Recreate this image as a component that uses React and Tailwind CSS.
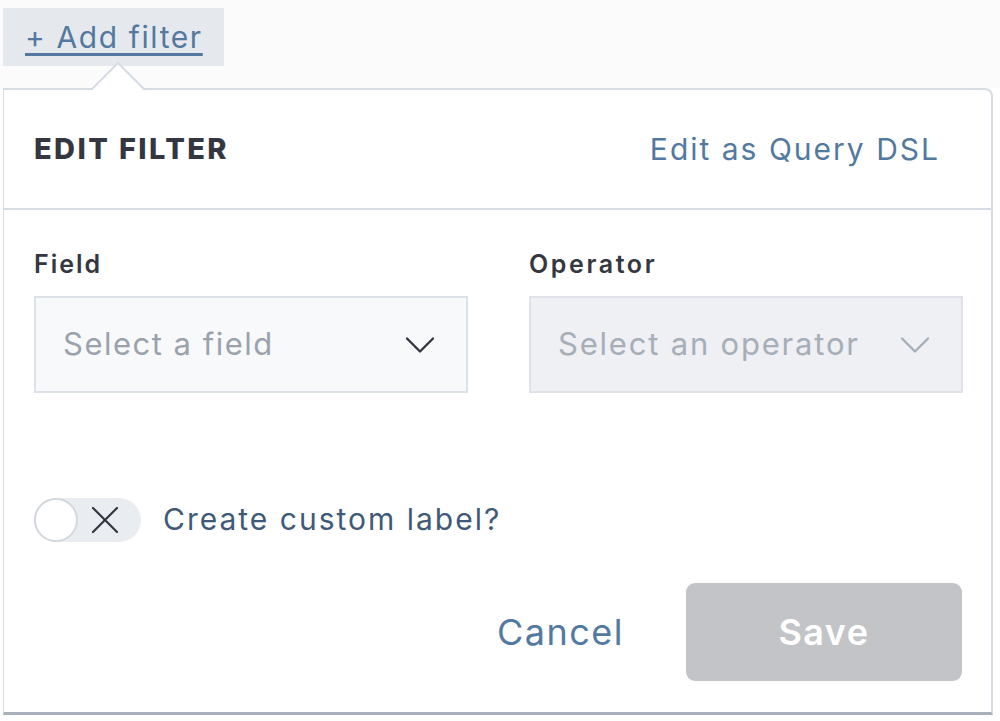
import { FiChevronDown, FiX } from "react-icons/fi";

export default function App() {
  return (
    <div className="w-[1000px] h-[721px] bg-white overflow-hidden" style={{ fontFamily: "Inter, 'Noto Sans', sans-serif" }}>
      <div className="h-[88px] bg-[#fbfbfc] pt-[8px] pl-[3px]">
        <div className="w-[221px] h-[58px] bg-[#e5e9ee] pl-[22px] flex items-center">
          <span className="text-[30px] leading-none tracking-[1.6px] text-[#5379a0] underline decoration-[3px] underline-offset-[5px]">+ Add filter</span>
        </div>
      </div>

      <div className="relative ml-[3px] w-[990px] h-[627px] border-t-2 border-r-2 border-l border-[#d6dce3] border-b-[3px] border-b-[#a8b0bb] rounded-tr-[8px] bg-white">
        <svg className="absolute left-[87px] top-[-28px]" width="58" height="30" viewBox="0 0 58 30">
          <path d="M0 28 L27 1 L54 28" fill="white" stroke="#d6dce3" strokeWidth="2" />
          <rect x="2" y="28" width="50" height="2" fill="white" />
        </svg>

        <div className="h-[120px] flex items-center justify-between pl-[30px] pr-[51px] border-b-2 border-[#d6dce3]">
          <span className="text-[29px] font-extrabold text-[#343741] tracking-[2.4px]">EDIT FILTER</span>
          <span className="text-[30px] text-[#5379a0] tracking-[2px]">Edit as Query DSL</span>
        </div>

        <div className="flex gap-[61px] pl-[30px] pt-[38px]">
          <div className="w-[434px]">
            <div className="text-[25px] font-semibold text-[#343741] h-[48px] leading-[32px] tracking-[2px]">Field</div>
            <div className="h-[97px] bg-[#f8f9fb] border-2 border-[#dde2e8] flex items-center justify-between pl-[27px] pr-[20px]">
              <span className="text-[31px] text-[#9aa3ad] tracking-[1.5px]">Select a field</span>
              <FiChevronDown className="text-[#343741]" size={52} strokeWidth={1.1} />
            </div>
          </div>
          <div className="w-[434px]">
            <div className="text-[25px] font-semibold text-[#343741] h-[48px] leading-[32px] tracking-[2.6px]">Operator</div>
            <div className="h-[97px] bg-[#eef0f4] border-2 border-[#dfe3e9] flex items-center justify-between pl-[27px] pr-[20px]">
              <span className="text-[31px] text-[#a6aeb8] tracking-[1.8px]">Select an operator</span>
              <FiChevronDown className="text-[#a6aeb8]" size={52} strokeWidth={1.1} />
            </div>
          </div>
        </div>

        <div className="flex items-center pl-[30px] mt-[104px]">
          <div className="w-[107px] h-[44px] rounded-full bg-[#e9edf2] flex items-center">
            <div className="w-[44px] h-[44px] rounded-full bg-white border-2 border-[#d3d8de]" />
            <FiX className="ml-[3px] text-[#343741]" size={48} strokeWidth={1.1} />
          </div>
          <span className="ml-[22px] text-[30px] text-[#3f5a78] tracking-[2px]">Create custom label?</span>
        </div>

        <div className="flex items-center justify-end pr-[29px] mt-[41px]">
          <span className="text-[36px] text-[#5379a0] mr-[62px] tracking-[1.5px]">Cancel</span>
          <div className="w-[276px] h-[98px] rounded-[9px] bg-[#c2c4c8] flex items-center justify-center">
            <span className="text-[36px] font-semibold text-white tracking-[1.5px]">Save</span>
          </div>
        </div>
      </div>
    </div>
  );
}
